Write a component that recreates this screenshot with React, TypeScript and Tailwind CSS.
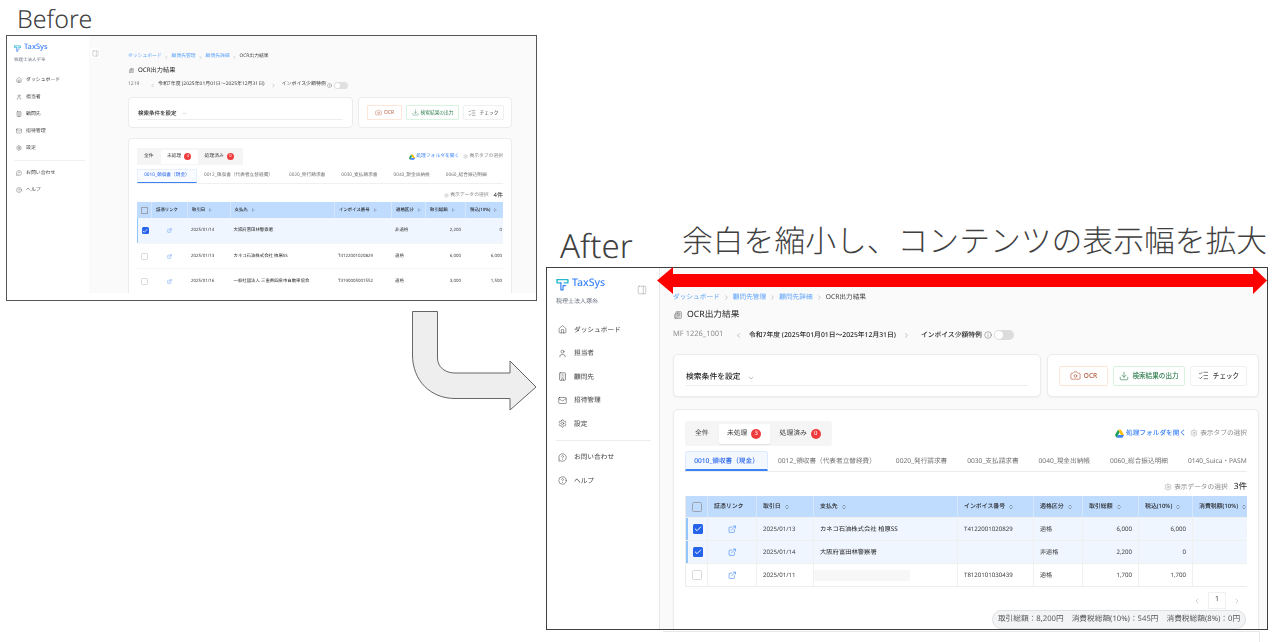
import {
  Building,
  Camera,
  Check,
  ChevronDown,
  ChevronLeft,
  ChevronRight,
  ChevronsUpDown,
  CircleHelp,
  Download,
  ExternalLink,
  House,
  Info,
  ListChecks,
  Mail,
  MessageCircleQuestion,
  Newspaper,
  PanelRight,
  Settings,
  User,
} from 'lucide-react';

const navTop = [
  { label: 'ダッシュボード', icon: House },
  { label: '担当者', icon: User },
  { label: '顧問先', icon: Building },
  { label: '招待管理', icon: Mail },
  { label: '設定', icon: Settings },
];
const navBottom = [
  { label: 'お問い合わせ', icon: MessageCircleQuestion },
  { label: 'ヘルプ', icon: CircleHelp },
];

const afterTabs = ['0012_領収書（代表者立替経費）', '0020_発行請求書', '0030_支払請求書', '0040_現金出納帳', '0060_総合振込明細', '0140_Suica・PASMO'];
const beforeTabs = ['0012_領収書（代表者立替経費）', '0020_発行請求書', '0030_支払請求書', '0040_現金出納帳', '0060_総合振込明細', '0'];

const afterHead = ['取引日', '支払先', 'インボイス番号', '適格区分', '取引総額', '税込(10%)', '消費税額(10%)'];
const beforeHead = ['取引日', '支払先', 'インボイス番号', '適格区分', '取引総額', '税込(10%)'];

const afterRows = [
  { on: true, date: '2025/01/13', to: 'カネコ石油株式会社 柏原SS', no: 'T4122001020829', kind: '適格', total: '6,000', inc: '6,000', tax: '545' },
  { on: true, date: '2025/01/14', to: '大阪府富田林警察署', no: '', kind: '非適格', total: '2,200', inc: '0', tax: '0' },
  { on: false, date: '2025/01/11', to: '', no: 'T8120101030439', kind: '適格', total: '1,700', inc: '1,700', tax: '154' },
];
const beforeRows = [
  { on: true, h: 'h-[26px]', date: '2025/01/14', to: '大阪府富田林警察署', no: '', kind: '非適格', total: '2,200', inc: '0' },
  { on: false, h: 'h-[25px]', date: '2025/01/13', to: 'カネコ石油株式会社 柏原SS', no: 'T4122001020829', kind: '適格', total: '6,000', inc: '6,000' },
  { on: false, h: 'h-[26px]', date: '2025/01/16', to: '一般社団法人 三重県四泉市自動車協会', no: 'T3190005001552', kind: '適格', total: '3,000', inc: '1,500' },
];

function Logo({ size }: { size: number }) {
  return (
    <svg width={size} height={size} viewBox="0 0 24 24" fill="none" strokeLinecap="round" strokeLinejoin="round">
      <path d="M2 3h20v6h-7" stroke="#22b8cf" strokeWidth="2.6" />
      <path d="M2 3v6h7" stroke="#22b8cf" strokeWidth="2.6" />
      <path d="M9 9v13h4V14h5" stroke="#3b82f6" strokeWidth="2.2" />
    </svg>
  );
}

function Drive({ size }: { size: number }) {
  return (
    <svg width={size} height={size} viewBox="0 0 24 22">
      <path d="M8 1h8l8 14h-8z" fill="#fbbc04" />
      <path d="M8 1L0 15l4 7 8-14z" fill="#1a9c5b" />
      <path d="M8 15h16l-4 7H4z" fill="#4285f4" />
    </svg>
  );
}

function Box({ on, size, icon }: { on: boolean; size: string; icon: number }) {
  return on ? (
    <span className={`${size} flex items-center justify-center rounded-[1.5px] bg-[#2563eb] text-white`}>
      <Check size={icon} strokeWidth={3} />
    </span>
  ) : (
    <span className={`${size} rounded-[1.5px] border border-[#d9d9d9] bg-white`} />
  );
}

function AfterWindow() {
  return (
    <div className="absolute left-[546px] top-[267px] flex h-[363px] w-[722px] overflow-hidden border-[1.5px] border-[#3f3f3f] bg-white blur-[0.25px]">
      <aside className="relative w-[113px] shrink-0 border-r border-[#e5e7eb] bg-white pl-[9px] pr-[8px] pt-[9px]">
        <div className="flex h-[14px] items-center gap-[3px]">
          <Logo size={13} />
          <span className="text-[10.5px] font-medium text-[#3b82f6]">TaxSys</span>
        </div>
        <div className="mt-[6px] text-[6px] text-[#6b7280]">税理士法人塚糸</div>
        <button className="absolute left-[90px] top-[17px] text-[#a3a3a3]">
          <PanelRight size={10} strokeWidth={1.4} />
        </button>
        <nav className="mt-[12px] flex flex-col">
          {navTop.map((n) => (
            <div key={n.label} className="flex h-[23.5px] items-center gap-[7px] pl-[2px] text-[6.7px] text-[#404040]">
              <n.icon size={9} strokeWidth={1.4} />
              <span>{n.label}</span>
            </div>
          ))}
        </nav>
        <div className="mt-[4px] mb-[5px] h-px bg-[#ededed]" />
        {navBottom.map((n) => (
          <div key={n.label} className="flex h-[23.5px] items-center gap-[7px] pl-[2px] text-[6.7px] text-[#404040]">
            <n.icon size={9} strokeWidth={1.4} />
            <span>{n.label}</span>
          </div>
        ))}
      </aside>

      <main className="relative min-w-0 flex-1 bg-[#fafafa] pl-[13px] pr-[8px] pt-[23px]">
        <div className="flex h-[12px] items-center gap-[3px] text-[6.7px] text-[#60a5fa]">
          <span>ダッシュボード</span>
          <ChevronRight size={7} className="text-[#9ca3af]" />
          <span>顧問先管理</span>
          <ChevronRight size={7} className="text-[#9ca3af]" />
          <span>顧問先詳細</span>
          <ChevronRight size={7} className="text-[#9ca3af]" />
          <span className="text-[#404040]">OCR出力結果</span>
        </div>
        <div className="mt-[5px] flex h-[14px] items-center gap-[4px] pl-[1px] text-[8.7px] text-[#262626]">
          <Newspaper size={8} strokeWidth={1.6} className="text-[#525252]" />
          <span className="ml-[1px]">OCR出力結果</span>
        </div>
        <div className="mt-[6px] flex h-[14px] items-center text-[6.8px] text-[#262626]">
          <span className="w-[62px] text-[7.5px] text-[#8c8c8c]">MF 1226_1001</span>
          <ChevronLeft size={7} className="text-[#8c8c8c]" />
          <span className="ml-[7px] font-medium whitespace-nowrap">令和7年度 (2025年01月01日～2025年12月31日)</span>
          <ChevronRight size={7} className="ml-[7px] text-[#8c8c8c]" />
          <span className="ml-[11px] font-medium whitespace-nowrap">インボイス少額特例</span>
          <Info size={8} strokeWidth={1.3} className="ml-[2px] text-[#525252]" />
          <span className="ml-[2px] flex h-[10px] w-[20px] items-center rounded-full bg-[#dcdcdc] pl-[1px]">
            <span className="h-[8px] w-[8px] rounded-full bg-white" />
          </span>
        </div>

        <div className="mt-[12px] flex gap-[6px]">
          <div className="flex h-[43px] w-[368px] flex-col justify-center rounded-[5px] border border-[#ececec] bg-white px-[12px] shadow-[0_1px_2px_rgba(0,0,0,0.05)]">
            <div className="mt-[3px] flex h-[18px] items-center gap-[6px] border-b border-[#ededed] pt-[3px] text-[7.8px] font-medium text-[#262626]">
              <span>検索条件を設定</span>
              <ChevronDown size={8} className="text-[#9ca3af]" />
            </div>
          </div>
          <div className="flex h-[43px] flex-1 items-center gap-[5px] rounded-[5px] border border-[#ececec] bg-white pl-[11px] shadow-[0_1px_2px_rgba(0,0,0,0.05)]">
            <button className="flex h-[20px] w-[49px] items-center justify-center gap-[3px] rounded-[2px] border border-[#fde6d8] text-[6.5px] font-medium text-[#b4583c]">
              <Camera size={11} strokeWidth={1.4} />
              OCR
            </button>
            <button className="flex h-[20px] w-[72px] items-center justify-center gap-[3px] rounded-[2px] border border-[#d8f3e0] text-[6.6px] font-medium text-[#2f7d4f]">
              <Download size={10} strokeWidth={1.5} />
              検索結果の出力
            </button>
            <button className="flex h-[20px] w-[57px] items-center justify-center gap-[4px] rounded-[2px] border border-[#f0f0f0] text-[6.6px] font-medium text-[#404040]">
              <ListChecks size={11} strokeWidth={1.4} />
              チェック
            </button>
          </div>
        </div>

        <div className="mt-[12px] h-[240px] rounded-[5px] border border-[#ececec] bg-white px-[11px] pt-[11px] shadow-[0_1px_2px_rgba(0,0,0,0.05)]">
          <div className="flex items-center justify-between">
            <div className="flex h-[25px] items-center rounded-[3px] bg-[#f5f5f5] pl-[10px] text-[6.8px] text-[#404040]">
              <span>全件</span>
              <span className="ml-[10px] flex h-[20px] w-[51px] items-center justify-center gap-[4px] rounded-[2px] bg-white shadow-[0_1px_1px_rgba(0,0,0,0.08)]">
                未処理
                <span className="flex h-[10px] w-[10px] items-center justify-center rounded-full bg-[#ef3b3b] text-[6px] text-white">3</span>
              </span>
              <span className="ml-[10px] flex items-center gap-[4px] pr-[11px]">
                処理済み
                <span className="flex h-[10px] w-[10px] items-center justify-center rounded-full bg-[#ef3b3b] text-[6px] text-white">0</span>
              </span>
            </div>
            <div className="flex items-center text-[6.7px]">
              <Drive size={9} />
              <span className="ml-[2px] font-medium text-[#3b82f6]">処理フォルダを開く</span>
              <Settings size={8} strokeWidth={1.2} className="ml-[4px] text-[#8c8c8c]" />
              <span className="ml-[2px] text-[#8c8c8c]">表示タブの選択</span>
            </div>
          </div>

          <div className="mt-[5px] flex h-[21px] overflow-hidden border-b border-[#ececec] text-[6.65px] text-[#737373]">
            <span className="flex w-[83px] shrink-0 items-center justify-center rounded-t-[3px] border border-b-2 border-[#dbeafe] border-b-[#3b82f6] bg-[#f3f8ff] font-medium text-[#2563eb]">
              0010_領収書（現金）
            </span>
            <div className="ml-[10px] flex items-center gap-[20px] whitespace-nowrap">
              {afterTabs.map((t) => (
                <span key={t}>{t}</span>
              ))}
            </div>
          </div>

          <div className="mt-[8px] flex h-[14px] items-center justify-end text-[6.7px] text-[#8c8c8c]">
            <Settings size={8} strokeWidth={1.2} />
            <span className="ml-[2px]">表示データの選択</span>
            <span className="ml-[6px] text-[8.5px] text-[#262626]">3件</span>
          </div>

          <div className="mt-[2px] overflow-hidden border-b border-l border-[#ececec] text-[6.1px] text-[#404040]">
            <div className="grid h-[21px] w-max grid-cols-[22px_49px_57px_144px_76px_49px_56px_54px_70px] items-center bg-[#bfdbfe] text-[5.9px] font-medium text-[#262626]">
              <span className="flex h-full items-center justify-center border-r border-[#d6e6fb]">
                <span className="h-[10px] w-[10px] rounded-[1.5px] border border-[#9ca3af]" />
              </span>
              <span className="flex h-full items-center pl-[6px] border-r border-[#d6e6fb]">証憑リンク</span>
              {afterHead.map((h) => (
                <span key={h} className="flex h-full items-center gap-[3px] whitespace-nowrap border-r border-[#d6e6fb] pl-[6px]">
                  {h}
                  <ChevronsUpDown size={6} className="text-[#525252]" />
                </span>
              ))}
            </div>
            {afterRows.map((r) => (
              <div
                key={r.date}
                className={`grid h-[23px] w-max grid-cols-[22px_49px_57px_144px_76px_49px_56px_54px_70px] items-center border-t border-[#f0f0f0] ${r.on ? 'bg-[#eff6ff]' : 'bg-white'}`}
              >
                <span className={`flex h-full items-center justify-center border-r border-[#f0f0f0] ${r.on ? 'border-l-2 border-l-[#93c5fd]' : ''}`}>
                  <Box on={r.on} size="h-[10px] w-[10px]" icon={8} />
                </span>
                <span className="flex h-full items-center justify-center border-r border-[#f0f0f0] text-[#3b82f6]">
                  <ExternalLink size={8.5} strokeWidth={1.7} />
                </span>
                <span className="flex h-full items-center border-r border-[#f0f0f0] pl-[6px]">{r.date}</span>
                <span className="flex h-full items-center border-r border-[#f0f0f0] pl-[6px] text-[6.3px] text-[#262626]">
                  {r.to || <span className="-ml-[6px] h-[11px] w-[96px] bg-[#f7f7f7]" />}
                </span>
                <span className="flex h-full items-center border-r border-[#f0f0f0] pl-[6px]">{r.no}</span>
                <span className="flex h-full items-center border-r border-[#f0f0f0] pl-[6px]">{r.kind}</span>
                <span className="flex h-full items-center justify-end border-r border-[#f0f0f0] pr-[6px]">{r.total}</span>
                <span className="flex h-full items-center justify-end border-r border-[#f0f0f0] pr-[6px]">{r.inc}</span>
                <span className="flex h-full items-center justify-end pr-[6px]">{r.tax}</span>
              </div>
            ))}
          </div>

          <div className="mt-[5px] flex h-[17px] items-center justify-end gap-[7px] pr-[6px] text-[#bdbdbd]">
            <ChevronLeft size={8} />
            <span className="flex h-[17px] w-[18px] items-center justify-center border border-[#f0f0f0] text-[7px] text-[#404040]">1</span>
            <ChevronRight size={8} />
          </div>
        </div>

        <div className="absolute bottom-0 right-[21px] flex h-[19px] w-[254px] items-center justify-center gap-[8px] rounded-full border border-[#e0e0e0] bg-[#f3f4f6] text-[7.7px] text-[#595959]">
          <span>取引総額：8,200円</span>
          <span>消費税総額(10%)：545円</span>
          <span>消費税総額(8%)：0円</span>
        </div>
      </main>
    </div>
  );
}

function BeforeWindow() {
  return (
    <div className="absolute left-[6px] top-[35px] flex h-[266px] w-[531px] border-[1.5px] border-[#555555] bg-white blur-[0.35px]">
      <aside className="w-[82px] shrink-0 pl-[7px] pt-[7px]">
        <div className="flex h-[10px] items-center gap-[3px]">
          <Logo size={7} />
          <span className="text-[7.5px] font-medium text-[#3b82f6]">TaxSys</span>
        </div>
        <div className="mt-[4px] text-[4.5px] text-[#6b7280]">税理士法人デモ</div>
        <nav className="mt-[8px] flex flex-col">
          {navTop.map((n) => (
            <div key={n.label} className="flex h-[17px] items-center gap-[4px] pl-[2px] text-[4.9px] text-[#404040]">
              <n.icon size={6} strokeWidth={1.4} />
              <span>{n.label}</span>
            </div>
          ))}
        </nav>
        <div className="mb-[4px] mr-[4px] mt-[3px] h-px bg-[#f0f0f0]" />
        {navBottom.map((n) => (
          <div key={n.label} className="flex h-[17px] items-center gap-[4px] pl-[2px] text-[4.9px] text-[#404040]">
            <n.icon size={6} strokeWidth={1.4} />
            <span>{n.label}</span>
          </div>
        ))}
      </aside>

      <div className="h-[257px] min-w-0 flex-1 overflow-hidden bg-[#fafafa]">
        <main className="relative pl-[39px] pr-[24px] pt-[17px]">
          <span className="absolute left-[1px] top-[12px] flex h-[10px] w-[10px] items-center justify-center bg-white text-[#a3a3a3]">
            <PanelRight size={7} strokeWidth={1.4} />
          </span>
          <div className="flex h-[8px] items-center gap-[2.5px] text-[4.8px] text-[#60a5fa]">
            <span>ダッシュボード</span>
            <ChevronRight size={5} className="text-[#9ca3af]" />
            <span>顧問先管理</span>
            <ChevronRight size={5} className="text-[#9ca3af]" />
            <span>顧問先詳細</span>
            <ChevronRight size={5} className="text-[#9ca3af]" />
            <span className="text-[#404040]">OCR出力結果</span>
          </div>
          <div className="mt-[4px] flex h-[10px] items-center gap-[4px] text-[6.2px] text-[#262626]">
            <Newspaper size={5} strokeWidth={1.6} className="ml-[1px] text-[#525252]" />
            <span>OCR出力結果</span>
          </div>
          <div className="mt-[5px] flex h-[10px] items-center text-[4.95px] text-[#404040]">
            <span className="w-[22px] text-[#737373]">1219</span>
            <ChevronLeft size={5} className="text-[#8c8c8c]" />
            <span className="ml-[3px] whitespace-nowrap">令和7年度 (2025年01月01日～2025年12月31日)</span>
            <ChevronRight size={5} className="ml-[6px] text-[#8c8c8c]" />
            <span className="ml-[6px] whitespace-nowrap">インボイス少額特例</span>
            <Info size={5} strokeWidth={1.3} className="ml-[1px]" />
            <span className="ml-[2px] flex h-[7px] w-[14px] items-center rounded-full bg-[#e0e0e0] pl-[1px]">
              <span className="h-[5px] w-[5px] rounded-full bg-white" />
            </span>
          </div>

          <div className="mt-[7px] flex gap-[5px]">
            <div className="flex h-[31px] w-[225px] flex-col justify-center rounded-[4px] border border-[#ececec] bg-white px-[9px]">
              <div className="mt-[2px] flex h-[13px] items-center gap-[5px] border-b border-[#ededed] text-[5.5px] font-medium text-[#262626]">
                <span>検索条件を設定</span>
                <ChevronDown size={5} className="text-[#9ca3af]" />
              </div>
            </div>
            <div className="flex h-[31px] flex-1 items-center gap-[4px] rounded-[4px] border border-[#ececec] bg-white pl-[8px]">
              <button className="flex h-[15px] w-[35px] items-center justify-center gap-[2px] rounded-[1px] border border-[#fde6d8] text-[4.8px] text-[#b4583c]">
                <Camera size={7} strokeWidth={1.3} />
                OCR
              </button>
              <button className="flex h-[15px] w-[53px] items-center justify-center gap-[2px] rounded-[1px] border border-[#d8f3e0] text-[4.7px] text-[#2f7d4f]">
                <Download size={7} strokeWidth={1.3} />
                検索結果の出力
              </button>
              <button className="flex h-[15px] w-[41px] items-center justify-center gap-[3px] rounded-[1px] border border-[#f0f0f0] text-[4.8px] text-[#404040]">
                <ListChecks size={8} strokeWidth={1.3} />
                チェック
              </button>
            </div>
          </div>

          <div className="mt-[10px] h-[180px] rounded-[4px] border border-[#ececec] bg-white pl-[8px] pr-[8px] pt-[9px]">
            <div className="flex items-center justify-between">
              <div className="flex h-[17px] w-[106px] items-center bg-[#f5f5f5] pl-[7px] text-[4.8px] text-[#404040]">
                <span>全件</span>
                <span className="ml-[7px] flex h-[14px] w-[37px] items-center justify-center gap-[3px] bg-white">
                  未処理
                  <span className="flex h-[7px] w-[7px] items-center justify-center rounded-full bg-[#ef3b3b] text-[4px] text-white">4</span>
                </span>
                <span className="ml-[7px] flex items-center gap-[3px]">
                  処理済み
                  <span className="flex h-[7px] w-[7px] items-center justify-center rounded-full bg-[#ef3b3b] text-[4px] text-white">0</span>
                </span>
              </div>
              <div className="flex items-center text-[4.8px]">
                <Drive size={6} />
                <span className="ml-[1px] text-[#3b82f6]">処理フォルダを開く</span>
                <Settings size={5} strokeWidth={1.2} className="ml-[4px] text-[#8c8c8c]" />
                <span className="ml-[1px] text-[#8c8c8c]">表示タブの選択</span>
              </div>
            </div>

            <div className="mt-[4px] flex h-[15px] overflow-hidden border-b border-[#f0f0f0] text-[4.7px] text-[#737373]">
              <span className="flex w-[60px] shrink-0 items-center justify-center border border-b-[1.5px] border-[#e8f0fe] border-b-[#3b82f6] bg-[#f8fbff] text-[#2563eb]">
                0010_領収書（現金）
              </span>
              <div className="ml-[7px] flex items-center gap-[16px] whitespace-nowrap">
                {beforeTabs.map((t) => (
                  <span key={t}>{t}</span>
                ))}
              </div>
            </div>

            <div className="mt-[7px] flex h-[9px] items-center justify-end text-[4.8px] text-[#8c8c8c]">
              <Settings size={5} strokeWidth={1.2} />
              <span className="ml-[1px]">表示データの選択</span>
              <span className="ml-[5px] text-[6px] text-[#262626]">4件</span>
            </div>

            <div className="mt-[2px] overflow-hidden text-[4.4px] text-[#404040]">
              <div className="grid h-[16px] grid-cols-[15px_35px_42.5px_104.5px_57px_34px_40px_38px] items-center bg-[#bfdbfe] font-medium text-[#262626]">
                <span className="flex h-full items-center justify-center border-r border-[#d6e6fb]">
                  <span className="h-[7px] w-[7px] border border-[#9ca3af]" />
                </span>
                <span className="pl-[4px]">証憑リンク</span>
                {beforeHead.map((h) => (
                  <span key={h} className="flex h-full items-center gap-[3px] whitespace-nowrap border-l border-[#d6e6fb] pl-[4px]">
                    {h}
                    <ChevronsUpDown size={4} />
                  </span>
                ))}
              </div>
              {beforeRows.map((r) => (
                <div
                  key={r.date}
                  className={`grid ${r.h} grid-cols-[15px_35px_42.5px_104.5px_57px_34px_40px_38px] items-center border-b border-[#f5f5f5] ${r.on ? 'bg-[#eff6ff]' : 'bg-white'}`}
                >
                  <span className={`flex h-full items-center justify-center ${r.on ? 'border-l border-l-[#93c5fd]' : ''}`}>
                    <Box on={r.on} size="h-[7px] w-[7px]" icon={6} />
                  </span>
                  <span className="flex justify-center text-[#3b82f6]">
                    <ExternalLink size={5} strokeWidth={1.7} />
                  </span>
                  <span className="pl-[4px]">{r.date}</span>
                  <span className="pl-[4px] whitespace-nowrap text-[#262626]">{r.to}</span>
                  <span className="pl-[4px]">{r.no}</span>
                  <span className="pl-[4px]">{r.kind}</span>
                  <span className="pr-[4px] text-right">{r.total}</span>
                  <span className="pr-[1px] text-right">{r.inc}</span>
                </div>
              ))}
            </div>
          </div>
        </main>
      </div>
    </div>
  );
}

export default function App() {
  return (
    <div className="relative h-[642px] w-[1280px] overflow-hidden bg-white font-['Noto_Sans','Noto_Sans_CJK_JP',sans-serif] [text-rendering:geometricPrecision]">
      <span className="absolute left-[17px] top-[2px] text-[25px] leading-[34px] font-light text-[#404040]">Before</span>
      <BeforeWindow />

      <svg className="absolute left-[400px] top-[300px]" width="150" height="120" viewBox="0 0 150 120">
        <path
          d="M12.5 11.5H37.5V58C37.5 67 45 73 55 73H110V61L136 87L110 110V98.5H55C30 98.5 12.5 80 12.5 55Z"
          fill="#eeeeee"
          stroke="#666666"
          strokeWidth="1"
        />
      </svg>

      <span className="absolute left-[560px] top-[225px] text-[33px] leading-[42px] font-light text-[#404040]">After</span>
      <span className="absolute left-[682px] top-[220px] whitespace-nowrap text-[30.8px] leading-[42px] font-light text-[#404040]">
        余白を縮小し、コンテンツの表示幅を拡大
      </span>
      <div className="absolute left-[663px] top-[631px] h-[11px] w-[597px] border-r border-t border-[#e8e8e8]" />
      <AfterWindow />

      <svg className="absolute left-[655px] top-[266px]" width="614" height="30" viewBox="0 0 614 30">
        <path d="M2 14.5L18 1V8H598V1L612 14.5L598 28V21H18V28Z" fill="#ff0000" />
      </svg>
    </div>
  );
}
